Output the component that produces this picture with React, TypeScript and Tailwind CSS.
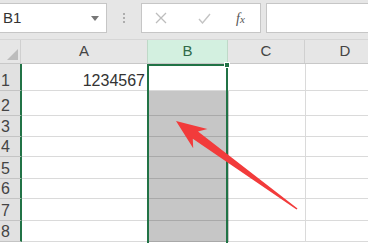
import React from 'react';

const rowHeights = [27, 25, 21, 20, 22, 20, 22, 21];

function RowHeader({ n }: { n: number }) {
  return (
    <div className="w-[19px] shrink-0 box-content border-r-2 border-[#217346] border-b border-b-[#c4c4c4] bg-[#e1e1e1] flex items-end pl-[1px] pb-[1px] text-[16px] leading-none text-[#444]">
      {n}
    </div>
  );
}

function Toolbar() {
  return (
    <div className="h-[40px] flex items-start pt-[3px] bg-[#e6e6e6] border-b border-[#d6d6d6]">
      {/* Name box */}
      <div className="w-[107px] h-[30px] bg-white border border-l-0 border-[#c6c6c6] flex items-center justify-between pl-[3px] pr-[7px]">
        <span className="text-[15px] text-[#333]">B1</span>
        <svg width="8" height="5" viewBox="0 0 8 5">
          <path d="M0 0 H8 L4 5 Z" fill="#777" />
        </svg>
      </div>

      {/* Dots */}
      <div className="w-[34px] h-[30px] flex flex-col items-center justify-center gap-[2px]">
        <span className="w-[2px] h-[2px] rounded-full bg-[#9a9a9a]" />
        <span className="w-[2px] h-[2px] rounded-full bg-[#9a9a9a]" />
        <span className="w-[2px] h-[2px] rounded-full bg-[#9a9a9a]" />
      </div>

      {/* Cancel / Enter / fx */}
      <div className="w-[120px] h-[30px] bg-white border border-[#c6c6c6] flex items-center">
        <svg width="12" height="12" viewBox="0 0 12 12" className="ml-[13px]">
          <path d="M1 1 L11 11 M11 1 L1 11" stroke="#bdbdbd" strokeWidth="1.3" />
        </svg>
        <svg width="13" height="11" viewBox="0 0 13 11" className="ml-[31px]">
          <path d="M1 6 L4.5 10 L12 1" stroke="#c4c4c4" strokeWidth="1.4" fill="none" />
        </svg>
        <span className="ml-[25px] font-['Liberation_Serif',serif] italic text-[14px] text-[#555]">
          f<span className="text-[11px]">x</span>
        </span>
      </div>

      {/* Formula input */}
      <div className="ml-[5px] flex-1 h-[30px] bg-white border border-r-0 border-[#c6c6c6]" />
    </div>
  );
}

function HeaderRow() {
  return (
    <div className="h-[24px] flex bg-[#e6e6e6] border-b border-[#c8c8c8] text-[15px] text-[#444]">
      <div className="w-[21px] shrink-0 border-r border-[#d0d0d0] flex items-end justify-end pr-[2px] pb-[3px]">
        <svg width="11" height="11" viewBox="0 0 11 11">
          <path d="M11 0 V11 H0 Z" fill="#bcbcbc" />
        </svg>
      </div>
      <div className="w-[126px] shrink-0 flex items-end justify-center pb-[1px]">A</div>
      <div className="w-[81px] shrink-0 bg-[#d3f0e0] border-x border-[#bfd9c8] flex items-end justify-center pb-[1px] text-[#2f6b48]">
        B
      </div>
      <div className="w-[77px] shrink-0 border-r border-[#d0d0d0] flex items-end justify-center pb-[1px]">C</div>
      <div className="w-[80px] shrink-0 flex items-end justify-center pb-[1px]">D</div>
    </div>
  );
}

export default function App() {
  return (
    <div className="relative w-[368px] h-[243px] overflow-hidden bg-white font-['Liberation_Sans',Arial,sans-serif]">
      <Toolbar />
      <HeaderRow />

      {/* Grid body */}
      <div className="flex flex-col">
        {rowHeights.map((h, i) => (
          <div key={i} className="flex shrink-0" style={{ height: h }}>
            <RowHeader n={i + 1} />
            <div className="w-[126px] shrink-0 border-r border-b border-[#dadada] flex items-end justify-end pr-[2px] pb-[1px] text-[16px] leading-none text-[#333]">
              {i === 0 ? '1234567' : ''}
            </div>
            <div
              className={
                i === 0
                  ? 'w-[81px] shrink-0 border-b border-[#dadada] bg-white'
                  : 'w-[81px] shrink-0 border-b border-[#a9a9a9] bg-[#c6c6c6]'
              }
            />
            <div className="w-[77px] shrink-0 border-r border-b border-[#dadada]" />
            <div className="w-[80px] shrink-0 border-b border-[#dadada]" />
          </div>
        ))}
      </div>

      {/* Column B selection outline */}
      <div className="absolute left-[147px] top-[64px] w-[81px] h-[200px] border-2 border-[#217346] pointer-events-none" />
      <div className="absolute left-[224px] top-[62px] w-[6px] h-[6px] bg-[#217346] border border-white pointer-events-none" />

      {/* Red arrow */}
      <svg className="absolute inset-0 pointer-events-none" width="368" height="243" viewBox="0 0 368 243">
        <polygon
          points="176,121 207.4,128.9 198,131.5 297.5,208.4 296.5,209.6 192.8,138.7 193.2,148.3"
          fill="#f23b3b"
        />
      </svg>
    </div>
  );
}
